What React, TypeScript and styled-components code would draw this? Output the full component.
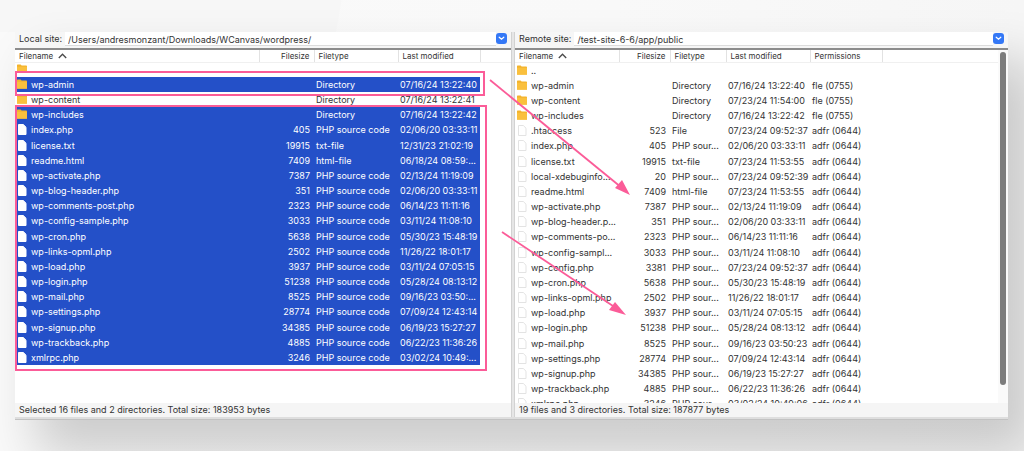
import React from "react";
import styled, { createGlobalStyle } from "styled-components";

const PINK = "#fb5c98";
const BLUE = "#2450c8";

const GlobalStyle = createGlobalStyle`
  * { box-sizing: border-box; }
  body {
    margin: 0;
    background: #f8f8f8;
    font-family: Inter, "Liberation Sans", sans-serif;
    color: #333;
  }
`;

const Page = styled.main`
  position: relative;
  min-height: 100vh;
  padding: 32px 16px 31px 15px;
  overflow: hidden;
  background:
    linear-gradient(100deg, #f7f7f7 0, #f7f7f7 336px, transparent 337px) no-repeat 0 0 / 100% 32px,
    linear-gradient(90deg, #fafafa 0%, #f9f9f9 60%, #f6f6f6 100%);
`;

const Window = styled.div`
  position: relative;
  display: flex;
  flex-direction: column;
  height: calc(100vh - 63px);
  min-height: 388px;
  background: #f6f6f6;
  box-shadow: 24px 32px 48px 4px rgba(0, 0, 0, 0.18);
`;

const Panes = styled.div`
  display: flex;
  flex: 1;
  min-height: 0;
`;

const BottomEdge = styled.div`
  height: 3px;
  background: #dedede;
  border-bottom: 1px solid #c2c2c2;
`;

const Divider = styled.div`
  width: 4px;
  background: #e6e6e6;
  border-left: 1px solid #d2d2d2;
  border-right: 1px solid #d2d2d2;
`;

const Pane = styled.section<{ $grow: number }>`
  position: relative;
  display: flex;
  flex-direction: column;
  flex: ${(p) => p.$grow} 1 0;
  min-width: 0;
`;

const PathBar = styled.div`
  display: flex;
  align-items: center;
  height: 18px;
  padding: 0 4px 3px 4px;
  background: #f6f6f6;
  border-bottom: 2px solid #8c8c8c;
`;

const PathLabel = styled.label`
  font-size: 9px;
  line-height: 14px;
  white-space: nowrap;
`;

const PathInput = styled.input`
  flex: 1;
  min-width: 0;
  height: 14px;
  margin-left: 3px;
  padding: 2px 3px 0;
  border: 0;
  border-bottom: 1px solid #dcdcdc;
  outline: 0;
  background: #fff;
  color: inherit;
  font: inherit;
  font-size: 9px;
`;

const DropButton = styled.button`
  display: grid;
  place-items: center;
  width: 11px;
  height: 11px;
  padding: 0;
  border: 0;
  border-radius: 3px;
  background: #3478f6;
`;

const ListArea = styled.div`
  display: flex;
  flex: 1;
  min-height: 0;
  overflow: hidden;
  background: #fff;
`;

const FileTable = styled.table`
  flex: 1;
  align-self: flex-start;
  width: 100%;
  min-width: 0;
  table-layout: fixed;
  border-collapse: collapse;
`;

const Col = styled.col<{ $w?: number }>`
  width: ${(p) => (p.$w ? `${p.$w}px` : "auto")};
`;

const HeadCell = styled.th<{ $right?: boolean }>`
  height: 12px;
  padding: 2px 4px 0;
  border-right: 1px solid #e2e2e2;
  border-bottom: 1px solid #f0f0f0;
  font-size: 8px;
  font-weight: 400;
  line-height: 9px;
  text-align: ${(p) => (p.$right ? "right" : "left")};
  white-space: nowrap;
  &:last-child { border-right: 0; }
`;

const SortMark = styled.svg`
  margin-left: 5px;
`;

const Row = styled.tr<{ $selected?: boolean }>`
  height: 15px;
  color: ${(p) => (p.$selected ? "#fff" : "inherit")};
  td:not(:last-child) {
    background: ${(p) => (p.$selected ? BLUE : "transparent")};
  }
  &:nth-child(6n) { height: 16px; }
`;

const Cell = styled.td<{ $right?: boolean }>`
  padding: 0 4px 0 2px;
  font-size: 9px;
  line-height: 15px;
  text-align: ${(p) => (p.$right ? "right" : "left")};
  white-space: nowrap;
`;

const NameBox = styled.div`
  display: flex;
  align-items: center;
  gap: 3px;
  svg { flex: none; }
`;

const ScrollTrack = styled.div`
  width: 10px;
  padding: 2px 2px 18px 2px;
  background: #fafafa;
`;

const ScrollThumb = styled.div`
  height: 100%;
  border-radius: 3px;
  background: #7c7c7c;
`;

const Status = styled.footer`
  height: 14px;
  padding-left: 4px;
  background: #f5f5f5;
  font-size: 9px;
  line-height: 14px;
  white-space: nowrap;
`;

const Highlight = styled.div<{ $top: number; $width: number; $height: number; $band?: boolean }>`
  position: absolute;
  top: ${(p) => p.$top}px;
  left: 0;
  width: ${(p) => p.$width}px;
  height: ${(p) => p.$height}px;
  border: 2px solid ${PINK};
  background: ${(p) => (p.$band ? "linear-gradient(#fff 4px, transparent 4px)" : "none")};
  pointer-events: none;
`;

const Arrows = styled.svg`
  position: absolute;
  top: 0;
  left: 0;
  pointer-events: none;
`;

const FolderIcon = () => (
  <svg width="11" height="11" viewBox="0 0 11 11" aria-hidden="true">
    <path d="M0 1.2Q0 .6 .6 .6H3.6L4.6 1.4H9.2Q10 1.4 10 2.2V9.4H0Z" fill="#f3b32c" />
    <path d="M0 2.8H10V9.2Q10 9.8 9.4 9.8H.6Q0 9.8 0 9.2Z" fill="#fac03d" />
  </svg>
);

const FileIcon = ({ outlined }: { outlined: boolean }) => (
  <svg width="11" height="13" viewBox="0 0 11 13" aria-hidden="true">
    <path
      d="M1.5 1.5H6.3L9 4.2V11.5H1.5Z"
      fill="#fff"
      stroke={outlined ? "#e3e3e3" : "#fff"}
      strokeWidth="1"
      strokeLinejoin="round"
    />
  </svg>
);

type Entry = [name: string, size: string, type: string, modified: string, perms?: string];

const PHP = "PHP source code";
const localFiles: Entry[] = [
  ["", "", "", ""],
  ["wp-admin", "", "Directory", "07/16/24 13:22:40"],
  ["wp-content", "", "Directory", "07/16/24 13:22:41"],
  ["wp-includes", "", "Directory", "07/16/24 13:22:42"],
  ["index.php", "405", PHP, "02/06/20 03:33:11"],
  ["license.txt", "19915", "txt-file", "12/31/23 21:02:19"],
  ["readme.html", "7409", "html-file", "06/18/24 08:59:..."],
  ["wp-activate.php", "7387", PHP, "02/13/24 11:19:09"],
  ["wp-blog-header.php", "351", PHP, "02/06/20 03:33:11"],
  ["wp-comments-post.php", "2323", PHP, "06/14/23 11:11:16"],
  ["wp-config-sample.php", "3033", PHP, "03/11/24 11:08:10"],
  ["wp-cron.php", "5638", PHP, "05/30/23 15:48:19"],
  ["wp-links-opml.php", "2502", PHP, "11/26/22 18:01:17"],
  ["wp-load.php", "3937", PHP, "03/11/24 07:05:15"],
  ["wp-login.php", "51238", PHP, "05/28/24 08:13:12"],
  ["wp-mail.php", "8525", PHP, "09/16/23 03:50:..."],
  ["wp-settings.php", "28774", PHP, "07/09/24 12:43:14"],
  ["wp-signup.php", "34385", PHP, "06/19/23 15:27:27"],
  ["wp-trackback.php", "4885", PHP, "06/22/23 11:36:26"],
  ["xmlrpc.php", "3246", PHP, "03/02/24 10:49:..."],
];

const SRC = "PHP sour...";
const DIR = "fle (0755)";
const FIL = "adfr (0644)";
const remoteFiles: Entry[] = [
  ["..", "", "", "", ""],
  ["wp-admin", "", "Directory", "07/16/24 13:22:40", DIR],
  ["wp-content", "", "Directory", "07/23/24 11:54:00", DIR],
  ["wp-includes", "", "Directory", "07/16/24 13:22:42", DIR],
  [".htaccess", "523", "File", "07/23/24 09:52:37", FIL],
  ["index.php", "405", SRC, "02/06/20 03:33:11", FIL],
  ["license.txt", "19915", "txt-file", "07/23/24 11:53:55", FIL],
  ["local-xdebuginfo...", "20", SRC, "07/23/24 09:52:39", FIL],
  ["readme.html", "7409", "html-file", "07/23/24 11:53:55", FIL],
  ["wp-activate.php", "7387", SRC, "02/13/24 11:19:09", FIL],
  ["wp-blog-header.p...", "351", SRC, "02/06/20 03:33:11", FIL],
  ["wp-comments-po...", "2323", SRC, "06/14/23 11:11:16", FIL],
  ["wp-config-sampl...", "3033", SRC, "03/11/24 11:08:10", FIL],
  ["wp-config.php", "3381", SRC, "07/23/24 09:52:37", FIL],
  ["wp-cron.php", "5638", SRC, "05/30/23 15:48:19", FIL],
  ["wp-links-opml.php", "2502", SRC, "11/26/22 18:01:17", FIL],
  ["wp-load.php", "3937", SRC, "03/11/24 07:05:15", FIL],
  ["wp-login.php", "51238", SRC, "05/28/24 08:13:12", FIL],
  ["wp-mail.php", "8525", SRC, "09/16/23 03:50:23", FIL],
  ["wp-settings.php", "28774", SRC, "07/09/24 12:43:14", FIL],
  ["wp-signup.php", "34385", SRC, "06/19/23 15:27:27", FIL],
  ["wp-trackback.php", "4885", SRC, "06/22/23 11:36:26", FIL],
  ["xmlrpc.php", "3246", SRC, "03/02/24 10:49:06", FIL],
];

interface SiteProps {
  id: string;
  label: string;
  path: string;
  grow: number;
  columns: number[];
  files: Entry[];
  status: string;
  isSelected?: (index: number) => boolean;
  remote?: boolean;
  children?: React.ReactNode;
}

const FOLDER_ROWS = 4;

const SitePane = ({ id, label, path, grow, columns, files, status, isSelected, remote, children }: SiteProps) => (
  <Pane $grow={grow}>
    <PathBar>
      <PathLabel htmlFor={id}>{label}</PathLabel>
      <PathInput id={id} defaultValue={path} />
      <DropButton type="button" aria-label={`${label} history`}>
        <svg width="7" height="5" viewBox="0 0 7 5" aria-hidden="true">
          <path d="M1.2 1.2L3.5 3.3L5.8 1.2" fill="none" stroke="#fff" strokeWidth="1.2" strokeLinecap="round" />
        </svg>
      </DropButton>
    </PathBar>
    <ListArea>
      <FileTable>
        <colgroup>
          {columns.map((w, i) => (
            <Col key={i} $w={w} />
          ))}
          <Col />
        </colgroup>
        <thead>
          <tr>
            <HeadCell>
              Filename
              <SortMark width="9" height="6" viewBox="0 0 9 6" aria-hidden="true">
                <path d="M.8 5L4.5 1.2L8.2 5" fill="none" stroke="#4a4a4a" strokeWidth="1.3" />
              </SortMark>
            </HeadCell>
            <HeadCell $right>Filesize</HeadCell>
            <HeadCell>Filetype</HeadCell>
            <HeadCell>Last modified</HeadCell>
            {remote && <HeadCell>Permissions</HeadCell>}
            <HeadCell as="td" />
          </tr>
        </thead>
        <tbody>
          {files.map(([name, size, type, modified, perms], i) => (
            <Row key={i} $selected={isSelected?.(i)}>
              <Cell>
                <NameBox>
                  {i < FOLDER_ROWS ? <FolderIcon /> : <FileIcon outlined={!!remote} />}
                  {name}
                </NameBox>
              </Cell>
              <Cell $right>{size}</Cell>
              <Cell>{type}</Cell>
              <Cell>{modified}</Cell>
              {remote && <Cell>{perms}</Cell>}
              <Cell />
            </Row>
          ))}
        </tbody>
      </FileTable>
      {remote && (
        <ScrollTrack>
          <ScrollThumb />
        </ScrollTrack>
      )}
    </ListArea>
    <Status>{status}</Status>
    {children}
  </Pane>
);

export default function App() {
  return (
    <Page>
      <GlobalStyle />
      <Window>
        <Panes>
          <SitePane
            id="local"
            label="Local site:"
            path="/Users/andresmonzant/Downloads/WCanvas/wordpress/"
            grow={496}
            columns={[244, 55, 84, 82]}
            files={localFiles}
            status="Selected 16 files and 2 directories. Total size: 183953 bytes"
            isSelected={(i) => i === 1 || i > 2}
          >
            <Highlight $top={39} $width={470} $height={25} $band />
            <Highlight $top={73} $width={472} $height={266} />
          </SitePane>
          <Divider />
          <SitePane
            id="remote"
            label="Remote site:"
            path="/test-site-6-6/app/public"
            grow={493}
            columns={[104, 51, 56, 84, 72]}
            files={remoteFiles}
            status="19 files and 3 directories. Total size: 187877 bytes"
            remote
          />
        </Panes>
        <BottomEdge />
        <Arrows width="640" height="300" viewBox="15 32 640 300" aria-hidden="true">
          <g stroke={PINK} strokeWidth="1.8" fill={PINK}>
            <path d="M490 80L619 185.500" />
            <path d="M502 232L613 306" />
            <path d="M630 195L615 188L622 180Z" stroke="none" />
            <path d="M626 315L609 310L615 302Z" stroke="none" />
          </g>
        </Arrows>
      </Window>
    </Page>
  );
}
